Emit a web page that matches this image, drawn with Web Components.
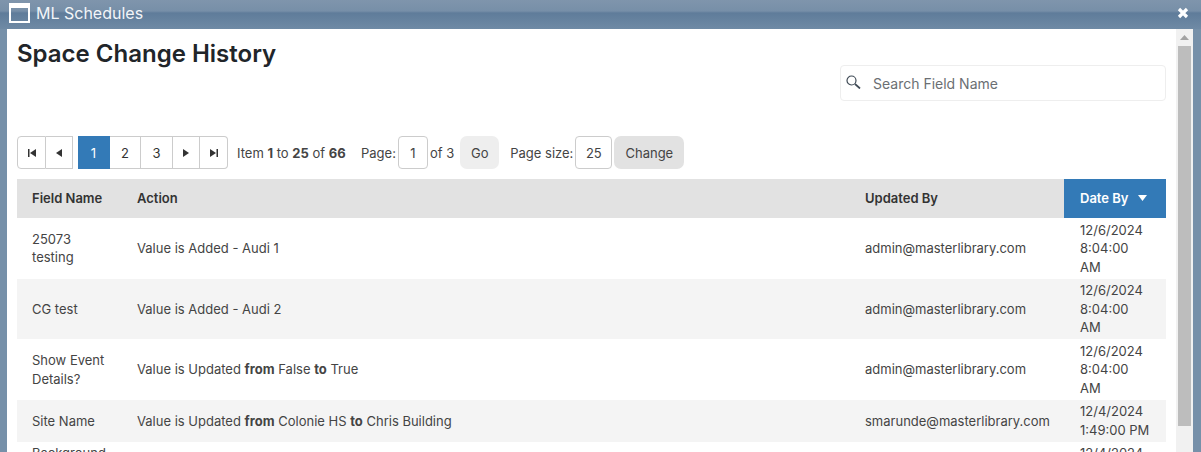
<!DOCTYPE html>
<html>
<head>
<meta charset="utf-8">
<title>ML Schedules</title>
<style>
    html, body { margin: 0; height: 452px; overflow: hidden; background: #7690a9; }
    body { font-family: Inter, "Liberation Sans", sans-serif; font-size: 13px; color: #333; }
</style>
</head>
<body>
<ml-window heading="ML Schedules">
    <ml-search-header heading="Space Change History" placeholder="Search Field Name"></ml-search-header>
    <ml-pager></ml-pager>
    <ml-history-table></ml-history-table>
</ml-window>

<script>
class MlWindow extends HTMLElement {
    constructor() {
        super();
        this.attachShadow({ mode: 'open' });
    }

    connectedCallback() {
        this.shadowRoot.innerHTML = `
            <style>
                :host { display: flex; flex-direction: column; height: 452px; overflow: hidden; }
                .bar {
                    box-sizing: border-box; flex: none; height: 29px; display: flex; align-items: center; gap: 6px;
                    padding: 2px 12px 5px 9px;
                    background: linear-gradient(#7f95ac 0, #778fa8 11px, #5f7c9a 13px, #6f8aa5 29px);
                    color: #fff; font-size: 16px;
                }
                .bar svg { display: block; flex: none; }
                .title { flex: 1; color: #f2f5f8; }
                .main { flex: 1; min-height: 0; display: flex; margin: 0 8px 0 7px; background: #fff; }
                .content { flex: 1; min-width: 0; padding: 0 10px; overflow: hidden; }
                .track { flex: none; width: 17px; background: #f1f1f1; display: flex; flex-direction: column; align-items: center; }
                .arrow { flex: none; height: 17px; display: flex; align-items: center; justify-content: center; }
                .thumb { flex: none; width: 13px; height: 380px; background: #bdbdbd; }
            </style>
            <div class="bar">
                <svg width="21" height="20" viewBox="0 0 21 20">
                    <rect x="1" y="1" width="19" height="18" fill="none" stroke="#fff" stroke-width="2"/>
                    <rect x="1" y="1" width="19" height="4" fill="#fff"/>
                </svg>
                <span class="title">${this.getAttribute('heading')}</span>
                <svg width="12" height="12" viewBox="0 0 12 12">
                    <path d="M2 2l8 8M10 2l-8 8" stroke="#fff" stroke-width="3.200"/>
                </svg>
            </div>
            <div class="main">
                <div class="content"><slot></slot></div>
                <div class="track">
                    <div class="arrow"><svg width="9" height="5" viewBox="0 0 9 5"><path d="M4.500 0L9 5H0z" fill="#a3a3a3"/></svg></div>
                    <div class="thumb"></div>
                </div>
            </div>
        `;
    }
}
customElements.define('ml-window', MlWindow);

class MlSearchHeader extends HTMLElement {
    constructor() {
        super();
        this.attachShadow({ mode: 'open' });
    }

    connectedCallback() {
        this.shadowRoot.innerHTML = `
            <style>
                :host { display: block; height: 107px; }
                h1 { margin: 0; padding-top: 10px; font-size: 24px; line-height: 29px; font-weight: 600; color: #212529; }
                .search {
                    box-sizing: border-box; width: 326px; height: 36px; margin: -3px 0 0 auto;
                    display: flex; align-items: center; gap: 12px; padding-left: 5px;
                    border: 1px solid #eee; border-radius: 4px; background: #fff;
                    color: #6b6f73; font-size: 14px;
                }
                svg { display: block; margin-top: -3px; }
            </style>
            <h1>${this.getAttribute('heading')}</h1>
            <div class="search">
                <svg width="15" height="14" viewBox="0 0 15 14" fill="none" stroke="#3f4a55" stroke-width="1.200">
                    <circle cx="5.500" cy="5.500" r="4.500"/>
                    <path d="M9 9l5 4.500" stroke-width="1.700"/>
                </svg>
                <span>${this.getAttribute('placeholder')}</span>
            </div>
        `;
    }
}
customElements.define('ml-search-header', MlSearchHeader);

class MlPager extends HTMLElement {
    constructor() {
        super();
        this.attachShadow({ mode: 'open' });
    }

    // 페이저 화살표 아이콘
    icon(d) {
        return `<svg width="8" height="8" viewBox="0 0 8 8" fill="#333"><path d="${d}"/></svg>`;
    }

    connectedCallback() {
        this.shadowRoot.innerHTML = `
            <style>
                :host { display: flex; align-items: center; height: 33px; margin-bottom: 10px; font-size: 13px; color: #444; }
                .group { display: flex; height: 33px; }
                .btn {
                    box-sizing: border-box; height: 33px; display: flex; align-items: center; justify-content: center;
                    border: 1px solid #ccc; border-left: 0; background: #fff; color: #333;
                }
                .first { width: 29px; border-left: 1px solid #ccc; border-radius: 4px 0 0 4px; }
                .prev { width: 27px; margin-right: 5px; }
                .num { width: 31px; }
                .num.wide { width: 32px; }
                .num.active { width: 32px; background: #337ab7; border-color: #337ab7; color: #fff; }
                .next { width: 27px; }
                .last { width: 28px; border-radius: 0 4px 4px 0; }
                .info { margin-left: 9px; width: 124px; }
                b { font-weight: 700; }
                .box {
                    box-sizing: border-box; height: 33px; display: flex; align-items: center; justify-content: center;
                    border: 1px solid #ccc; border-radius: 4px; background: #fff; color: #444;
                }
                .action {
                    height: 33px; display: flex; align-items: center; justify-content: center;
                    border-radius: 7px; color: #444;
                }
            </style>
            <div class="group">
                <div class="btn first">${this.icon('M0 0h1.500v8H0zM8 0v8L2 4z')}</div>
                <div class="btn prev">${this.icon('M7 0v8L1 4z')}</div>
                <div class="btn num active">1</div>
                <div class="btn num">2</div>
                <div class="btn num wide">3</div>
                <div class="btn next">${this.icon('M1 0v8l6-4z')}</div>
                <div class="btn last">${this.icon('M0 0v8l6-4zM6.500 0H8v8H6.500z')}</div>
            </div>
            <span class="info">Item <b>1</b> to <b>25</b> of <b>66</b></span>
            <span>Page:</span>
            <div class="box" style="width:30px;margin-left:2px">1</div>
            <span style="margin-left:2px">of 3</span>
            <div class="action" style="width:39px;margin-left:6px;background:#eee">Go</div>
            <span style="margin-left:11px">Page size:</span>
            <div class="box" style="width:37px;margin-left:2px">25</div>
            <div class="action" style="width:70px;margin-left:2px;background:#e2e2e2">Change</div>
        `;
    }
}
customElements.define('ml-pager', MlPager);

class MlHistoryTable extends HTMLElement {
    constructor() {
        super();
        this.attachShadow({ mode: 'open' });
        this.rows = [
            { field: '25073 testing', action: 'Value is Added - Audi 1', by: 'admin@masterlibrary.com', date: '12/6/2024 8:04:00 AM' },
            { field: 'CG test', action: 'Value is Added - Audi 2', by: 'admin@masterlibrary.com', date: '12/6/2024 8:04:00 AM' },
            { field: 'Show Event Details?', action: 'Value is Updated <b>from</b> False <b>to</b> True', by: 'admin@masterlibrary.com', date: '12/6/2024 8:04:00 AM' },
            { field: 'Site Name', action: 'Value is Updated <b>from</b> Colonie HS <b>to</b> Chris Building', by: 'smarunde@masterlibrary.com', date: '12/4/2024 1:49:00 PM' },
            { field: 'Background Color', action: '', by: '', date: '12/4/2024 1:49:00 PM' }
        ];
    }

    connectedCallback() {
        this.shadowRoot.innerHTML = `
            <style>
                :host { display: block; }
                table { width: 1149px; table-layout: fixed; border-collapse: collapse; font-size: 13px; line-height: 18.570px; color: #444; }
                th { height: 39px; padding: 0 15px; background: #e2e2e2; text-align: left; font-weight: 600; color: #333; }
                th.sorted { background: #337ab7; color: #fff; padding-left: 16px; }
                th svg { margin-left: 6px; vertical-align: 2px; }
                td { padding: 2.600px 15px 2.300px; vertical-align: middle; }
                td.date { padding-left: 16px; }
                tr:nth-child(even) td { background: #f4f4f4; }
            </style>
            <table>
                <colgroup><col style="width:105px"><col style="width:728px"><col style="width:214px"><col style="width:102px"></colgroup>
                <thead>
                    <tr>
                        <th>Field Name</th><th>Action</th><th>Updated By</th>
                        <th class="sorted">Date By <svg width="9" height="6" viewBox="0 0 9 6"><path d="M0 0h9L4.500 6z" fill="#fff"/></svg></th>
                    </tr>
                </thead>
                <tbody>
                    ${this.rows.map(row => `
                        <tr>
                            <td>${row.field}</td>
                            <td>${row.action}</td>
                            <td>${row.by}</td>
                            <td class="date">${row.date}</td>
                        </tr>
                    `).join('')}
                </tbody>
            </table>
        `;
    }
}
customElements.define('ml-history-table', MlHistoryTable);
</script>
</body>
</html>
